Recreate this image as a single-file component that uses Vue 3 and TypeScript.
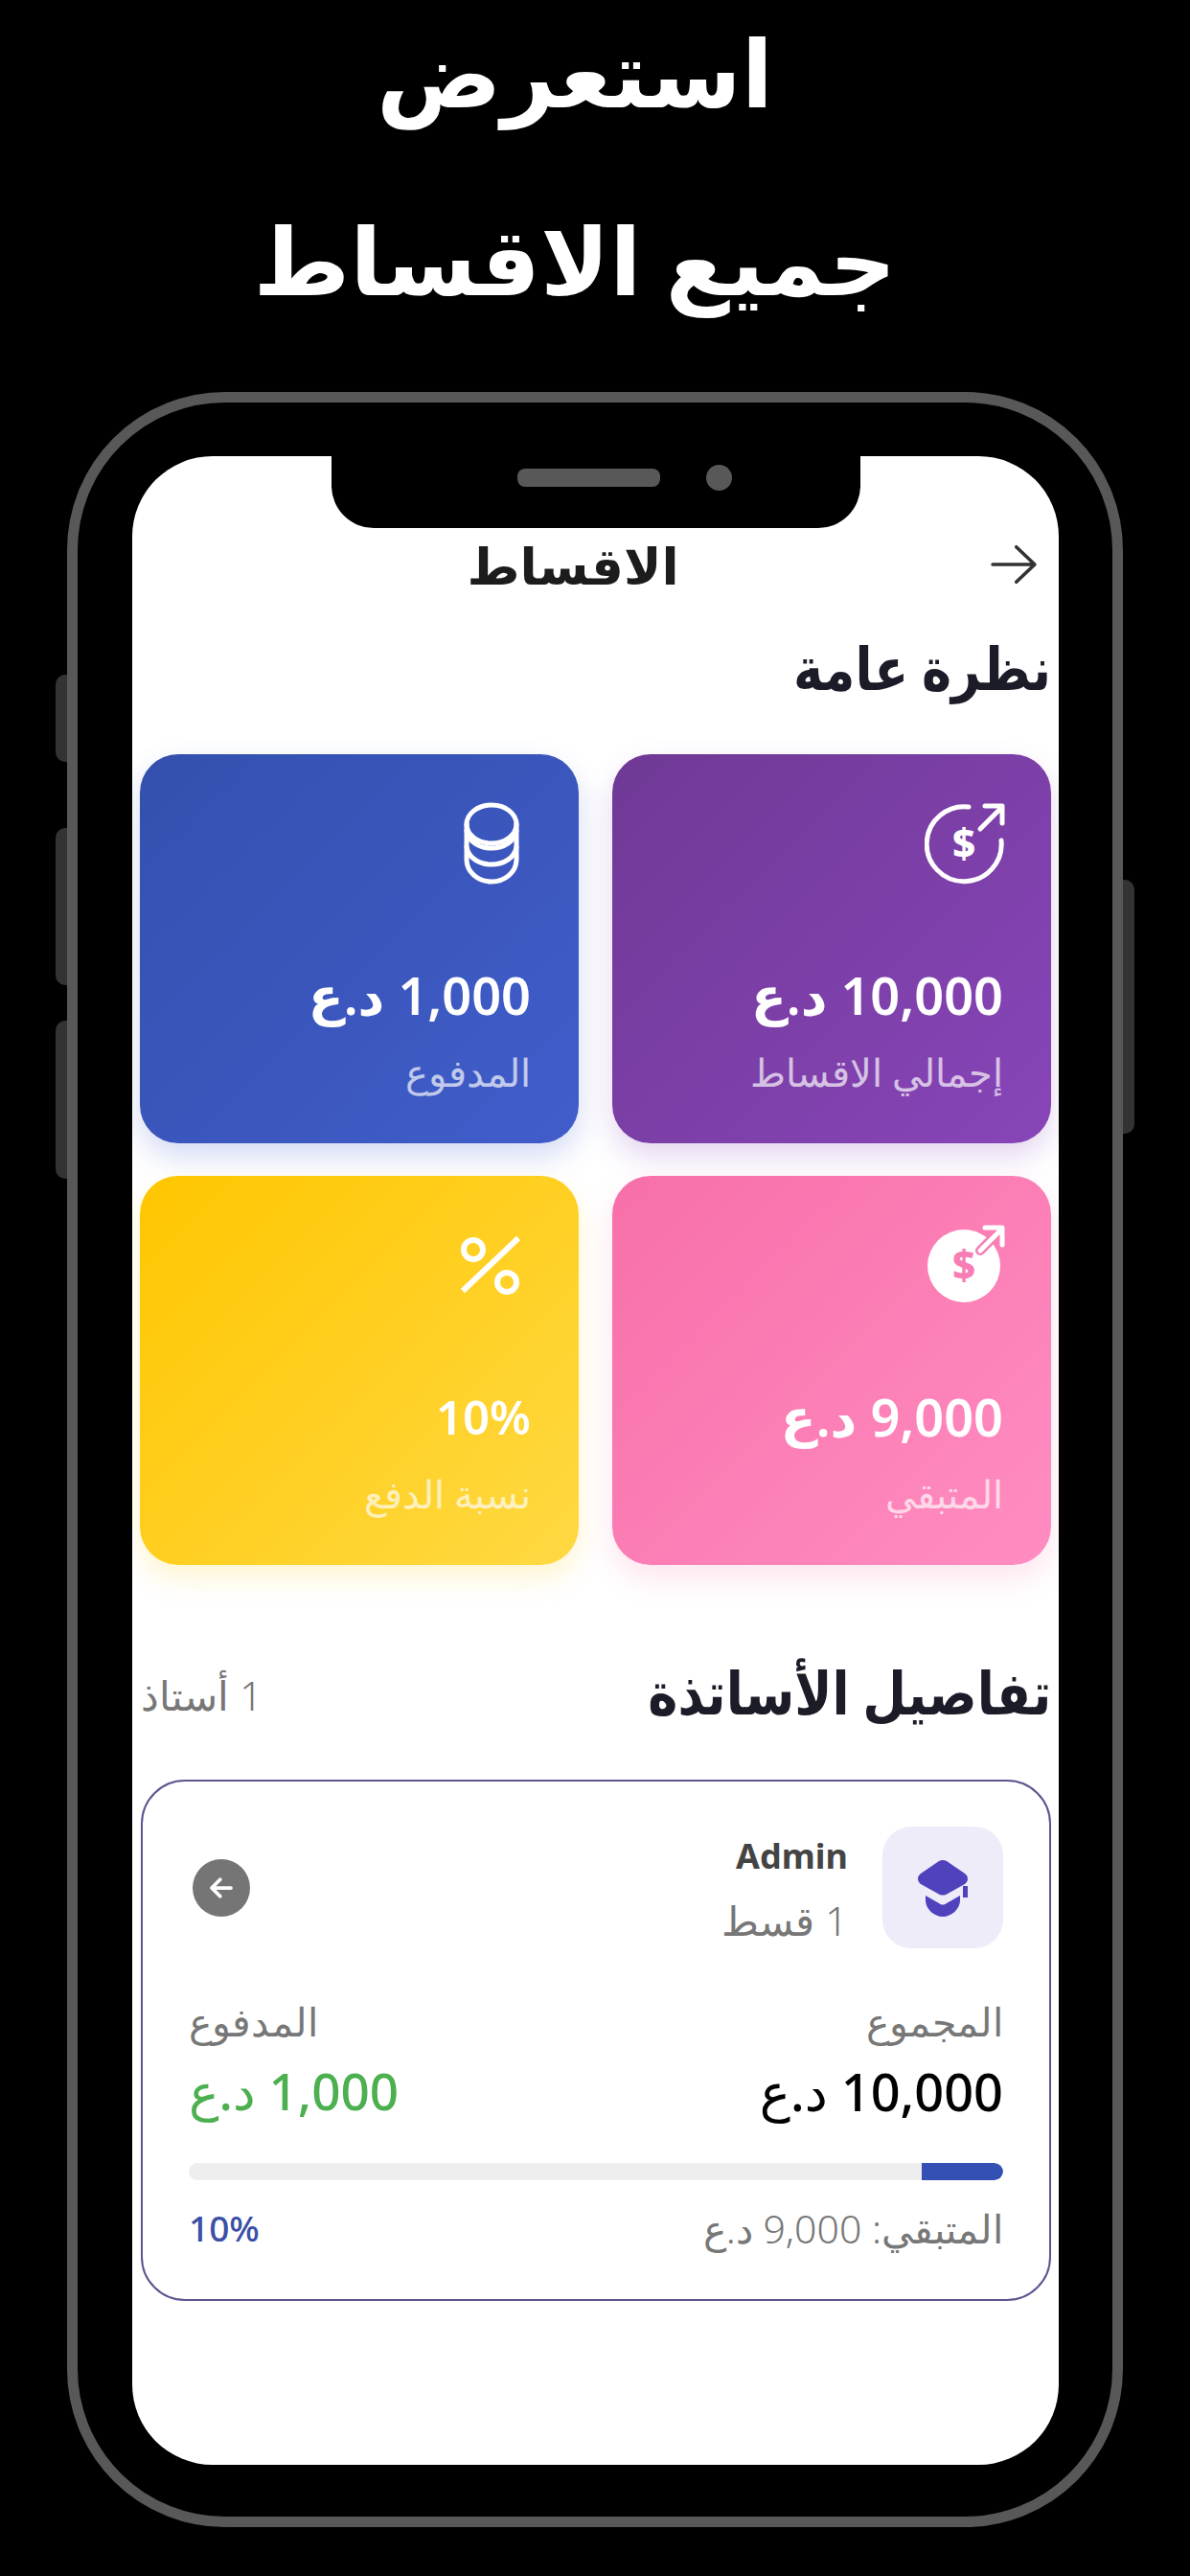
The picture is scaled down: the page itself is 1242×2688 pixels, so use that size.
<script setup lang="ts">
interface Stat {
  key: string
  value: string
  label: string
  tone: string
}

const stats: Stat[] = [
  { key: 'total', value: '10,000 د.ع', label: 'إجمالي الاقساط', tone: 'purple' },
  { key: 'paid', value: '1,000 د.ع', label: 'المدفوع', tone: 'blue' },
  { key: 'left', value: '9,000 د.ع', label: 'المتبقي', tone: 'pink' },
  { key: 'rate', value: '10%', label: 'نسبة الدفع', tone: 'yellow' },
]
const progress = 10
</script>

<template>
  <div class="page">
    <header class="promo">
      <div class="promo-line">استعرض</div>
      <div class="promo-line">جميع الاقساط</div>
    </header>

    <div class="phone">
      <span class="side side-a"></span>
      <span class="side side-b"></span>
      <span class="side side-c"></span>
      <span class="side side-d"></span>

      <div class="screen">
        <div class="notch">
          <span class="camera"></span>
          <span class="speaker"></span>
        </div>

        <div class="appbar" dir="rtl">
          <svg class="back" viewBox="0 0 54 46" fill="none" stroke="#333" stroke-width="4" stroke-linecap="round" stroke-linejoin="round">
            <path d="M3 23H50M30 3l21 20-21 20" />
          </svg>
          <h1 class="appbar-title">الاقساط</h1>
        </div>

        <h2 class="section-title overview" dir="rtl">نظرة عامة</h2>

        <div class="grid" dir="rtl">
          <article v-for="s in stats" :key="s.key" class="card" :class="s.tone">
            <div class="icon-slot">
              <svg v-if="s.key === 'total'" class="ic-money" viewBox="0 0 84 88" fill="none" stroke="#fff" stroke-width="5" stroke-linecap="round" stroke-linejoin="round">
                <path d="M46 5A39 39 0 1 0 80 40" />
                <path d="M58 28 80 6M63 4H81V22" />
                <text x="41" y="59" class="dollar" fill="#fff" stroke="none" text-anchor="middle">$</text>
              </svg>
              <svg v-else-if="s.key === 'paid'" class="ic-coins" viewBox="0 0 58 86" fill="none" stroke="#fff" stroke-width="5" stroke-linecap="round" stroke-linejoin="round">
                <ellipse cx="29" cy="23" rx="26" ry="20" />
                <path d="M3 23V60C3 73 15 83 29 83S55 73 55 60V23" />
                <path d="M3 30C5 41 16 48 29 48S53 41 55 30" />
                <path d="M3 47C5 58 16 65 29 65S53 58 55 47" />
              </svg>
              <svg v-else-if="s.key === 'left'" class="ic-money" viewBox="0 0 84 88" fill="none" stroke-linecap="round" stroke-linejoin="round">
                <circle cx="41" cy="44" r="38" fill="#fff" />
                <path d="M58 28 80 6" stroke="#f77db4" stroke-width="10" />
                <path d="M58 28 80 6M63 4H81V22" stroke="#fff" stroke-width="5" />
                <text x="41" y="59" class="dollar" fill="#f77db4" text-anchor="middle">$</text>
              </svg>
              <svg v-else class="ic-pct" viewBox="0 0 62 64" fill="none" stroke="#fff" stroke-width="6">
                <circle cx="13" cy="16" r="10" />
                <circle cx="48" cy="50" r="10" />
                <path d="M2 59 60 4" />
              </svg>
            </div>
            <div class="card-value">{{ s.value }}</div>
            <div class="card-label">{{ s.label }}</div>
          </article>
        </div>

        <div class="teachers-head" dir="rtl">
          <h2 class="section-title teachers-title">تفاصيل الأساتذة</h2>
          <span class="teachers-count">1 أستاذ</span>
        </div>

        <section class="teacher" dir="rtl">
          <div class="teacher-top">
            <div class="avatar">
              <svg viewBox="0 0 54 60" class="cap" fill="#5041bd">
                <path d="M23 2C25.500 .5 28.500 .5 31 2L50 15C54 18 54 23 50 26L32 36C29 38 25 38 22 36L4 26C0 23 0 18 4 15Z" />
                <path d="M48 28H53V40H48Z" />
                <path d="M9 38 23 46C26 48 28 48 31 46L45 38V43C45 52 36 60 27 60S9 52 9 43Z" />
              </svg>
            </div>
            <div class="who">
              <div class="who-name">Admin</div>
              <div class="who-sub">1 قسط</div>
            </div>
            <span class="go">
              <svg viewBox="0 0 24 24" fill="none" stroke="#fff" stroke-width="3" stroke-linecap="round" stroke-linejoin="round">
                <path d="M20 12H5M11 5l-7 7 7 7" />
              </svg>
            </span>
          </div>

          <div class="amounts">
            <div class="amount">
              <div class="amount-label">المجموع</div>
              <div class="amount-value">10,000 د.ع</div>
            </div>
            <div class="amount amount-paid">
              <div class="amount-label">المدفوع</div>
              <div class="amount-value paid">1,000 د.ع</div>
            </div>
          </div>

          <div class="track">
            <div class="fill" :style="{ width: progress + '%' }"></div>
          </div>

          <div class="foot">
            <span class="remain">المتبقي: 9,000 د.ع</span>
            <span class="rate">10%</span>
          </div>
        </section>
      </div>
    </div>
  </div>
</template>

<style>
html, body { margin: 0; background: #000; }
</style>

<style scoped>
.page {
  width: 1242px;
  height: 2688px;
  overflow: hidden;
  background: #000;
  font-family: "Noto Sans", "DejaVu Sans", sans-serif;
  display: flex;
  flex-direction: column;
}
.promo {
  height: 409px;
  flex: none;
  padding-right: 42px;
  box-sizing: border-box;
  text-align: center;
  color: #fff;
  font-weight: 700;
  font-size: 97px;
}
.promo-line { height: 190px; line-height: 148px; }
.promo-line + .promo-line { line-height: 160px; }

.phone {
  position: relative;
  margin-left: 70px;
  width: 1102px;
  height: 2228px;
  box-sizing: border-box;
  border: 11px solid #585858;
  border-radius: 165px;
  flex: none;
}
.side {
  position: absolute;
  width: 12px;
  background: #333;
}
.side-a { left: -23px; top: 284px; height: 91px; border-radius: 10px 0 0 10px; }
.side-b { left: -23px; top: 444px; height: 164px; border-radius: 10px 0 0 10px; }
.side-c { left: -23px; top: 645px; height: 165px; border-radius: 10px 0 0 10px; }
.side-d { right: -23px; top: 498px; height: 265px; border-radius: 0 10px 10px 0; }

.screen {
  position: relative;
  margin: 56px 0 0 57px;
  width: 967px;
  height: 2096px;
  box-sizing: border-box;
  background: #fff;
  border-radius: 84px;
  overflow: hidden;
  padding: 75px 8px 0 9px;
}
.notch {
  position: absolute;
  top: 0;
  left: 208px;
  width: 552px;
  height: 75px;
  background: #000;
  border-radius: 0 0 44px 44px;
  display: flex;
  align-items: center;
  justify-content: center;
  flex-direction: row-reverse;
  gap: 48px;
  padding: 0 0 30px 60px;
  box-sizing: border-box;
}
.speaker { width: 149px; height: 19px; border-radius: 8px; background: #585858; }
.camera { width: 27px; height: 27px; border-radius: 50%; background: #585858; }

.appbar {
  position: relative;
  height: 78px;
  display: flex;
  align-items: center;
  justify-content: center;
  padding-right: 48px;
  box-sizing: border-box;
}
.back {
  position: absolute;
  right: 14px;
  top: 17px;
  width: 50px;
  height: 42px;
}
.appbar-title {
  margin: 0;
  font-size: 53px;
  font-weight: 700;
  color: #1c1c1c;
  line-height: 76px;
}
.section-title {
  margin: 0;
  font-size: 62px;
  font-weight: 700;
  color: #1c1c28;
  line-height: 90px;
  transform: scaleX(.85);
  transform-origin: right center;
}
.overview { margin-top: 22px; margin-bottom: 46px; }
.teachers-title { margin-bottom: 6px; }

.grid {
  display: grid;
  grid-template-columns: 458px 458px;
  grid-auto-rows: 406px;
  gap: 34px 35px;
}
.card {
  box-sizing: border-box;
  border-radius: 40px;
  padding: 50px 50px 0;
  color: #fff;
}
.purple { background: linear-gradient(135deg, #6f3995, #8845b9); box-shadow: 0 14px 30px rgba(136, 69, 185, .22); }
.blue { background: linear-gradient(135deg, #3450ae, #415dcb); box-shadow: 0 14px 30px rgba(65, 93, 203, .22); }
.pink { background: linear-gradient(135deg, #f76fa9, #ff8dc1); box-shadow: 0 14px 30px rgba(247, 111, 169, .18); }
.yellow { background: linear-gradient(135deg, #ffc600, #ffd943); box-shadow: 0 14px 30px rgba(255, 200, 0, .18); }
.icon-slot { height: 88px; display: flex; justify-content: flex-start; }
.ic-money { width: 84px; height: 88px; margin-right: -2px; }
.ic-coins { width: 58px; height: 86px; margin-right: 12px; }
.ic-pct { width: 62px; height: 64px; margin-top: 11px; margin-right: 11px; }
.dollar { font-family: "Noto Sans", sans-serif; font-size: 42px; font-weight: 800; }
.card-value {
  margin-top: 83px;
  font-size: 54px;
  font-weight: 600;
  line-height: 60px;
}
.yellow .card-value { font-size: 49px; }
.card-label {
  margin-top: 26px;
  font-size: 40px;
  line-height: 50px;
  font-weight: 200;
  opacity: .68;
}

.teachers-head {
  margin-top: 90px;
  height: 90px;
  display: flex;
  align-items: center;
  justify-content: space-between;
}
.teachers-count { font-size: 42px; color: #777; font-weight: 300; }

.teacher {
  margin-top: 44px;
  box-sizing: border-box;
  height: 544px;
  border: 2px solid #5c558f;
  border-radius: 46px;
  padding: 47px 48px 0;
}
.teacher-top { display: flex; align-items: center; }
.avatar {
  width: 126px;
  height: 127px;
  border-radius: 30px;
  background: #eeecf8;
  display: flex;
  align-items: center;
  justify-content: center;
  flex: none;
}
.cap { width: 54px; height: 60px; }
.who { margin-right: 36px; flex: 1; }
.who-name { font-size: 36px; line-height: 50px; font-weight: 700; color: #444; direction: ltr; text-align: right; }
.who-sub { margin-top: 19px; font-size: 42px; line-height: 46px; color: #777; font-weight: 300; }
.go {
  width: 60px;
  height: 60px;
  margin-left: 4px;
  border-radius: 50%;
  background: #757575;
  display: flex;
  align-items: center;
  justify-content: center;
}
.go svg { width: 30px; height: 30px; }

.amounts { display: flex; justify-content: space-between; margin-top: 51px; }
.amount-paid { text-align: left; }
.amount-label { font-size: 41px; line-height: 50px; color: #777; font-weight: 300; }
.amount-value { margin-top: 18px; font-size: 54px; line-height: 60px; font-weight: 500; color: #000; }
.amount-value.paid { color: #4caf50; font-size: 53px; }

.track {
  margin-top: 45px;
  height: 18px;
  border-radius: 9px;
  background: #eee;
  overflow: hidden;
}
.fill { height: 100%; background: #3450b4; border-radius: 0 9px 9px 0; }

.foot {
  margin-top: 25px;
  display: flex;
  justify-content: space-between;
  align-items: center;
  line-height: 50px;
}
.remain { font-size: 41px; color: #777; font-weight: 300; }
.rate { font-size: 37px; color: #3a4fa5; font-weight: 500; }
</style>
